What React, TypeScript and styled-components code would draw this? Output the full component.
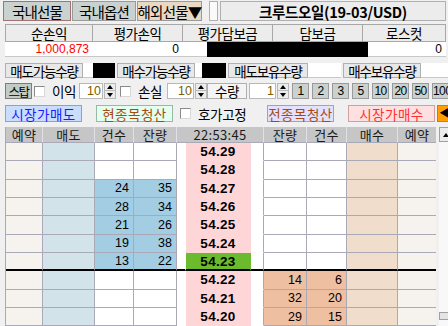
import React from 'react';
import styled, { createGlobalStyle } from 'styled-components';

const GlobalStyle = createGlobalStyle`
  html, body {
    margin: 0;
    padding: 0;
    background: #f0f0f0;
  }

  body {
    font-family: 'Liberation Sans', 'Noto Sans CJK KR', sans-serif;
    font-size: 12px;
    color: #000;
  }
`;

const KR = `'Noto Sans CJK KR', 'Liberation Sans', sans-serif`;
const LINE = '#a9a9b8';

type OrderRow = {
  price: string;
  sellCnt?: string;
  sellQty?: string;
  buyQty?: string;
  buyCnt?: string;
  current?: boolean;
};

const ROWS: OrderRow[] = [
  { price: '54.29' },
  { price: '54.28' },
  { price: '54.27', sellCnt: '24', sellQty: '35' },
  { price: '54.26', sellCnt: '28', sellQty: '34' },
  { price: '54.25', sellCnt: '21', sellQty: '26' },
  { price: '54.24', sellCnt: '19', sellQty: '38' },
  { price: '54.23', sellCnt: '13', sellQty: '22', current: true },
  { price: '54.22', buyQty: '14', buyCnt: '6' },
  { price: '54.21', buyQty: '32', buyCnt: '20' },
  { price: '54.20', buyQty: '29', buyCnt: '15' },
];

const QTY_BUTTONS = ['1', '2', '3', '5', '10', '20', '50', '100'];

const App = () => {
  return (
    <>
      <GlobalStyle />
      <Screen>
        <TopBar>
          <Tab $active>국내선물</Tab>
          <Tab $width={64}>국내옵션</Tab>
          <Tab $tone="#e9d8c2" $width={65}>
            해외선물▼
          </Tab>
          <BlankBox />
          <Title>크루드오일(19-03/USD)</Title>
        </TopBar>

        <InfoTable>
          <InfoHead $width={88}>순손익</InfoHead>
          <InfoHead $width={90}>평가손익</InfoHead>
          <InfoHead $width={90}>평가담보금</InfoHead>
          <InfoHead $width={90}>담보금</InfoHead>
          <InfoHead $width={83}>로스컷</InfoHead>
          <InfoValue $width={88} $color="#ff0000">
            <span>1,000,873</span>
          </InfoValue>
          <InfoValue $width={90}>
            <span>0</span>
          </InfoValue>
          <InfoValue $width={24} />
          <Masked $width={161} />
          <InfoValue $width={78}>
            <span>0</span>
          </InfoValue>
        </InfoTable>

        <QtyBar>
          <QtyLabel>매도가능수량</QtyLabel>
          <QtyValue $width={32}>
            <Masked $width={22} />
          </QtyValue>
          <QtyLabel>매수가능수량</QtyLabel>
          <QtyValue $width={31}>
            <Masked $width={24} />
          </QtyValue>
          <QtyLabel $width={80}>매도보유수량</QtyLabel>
          <QtyValue $width={33} />
          <QtyLabel>매수보유수량</QtyLabel>
          <QtyValue $width={27} />
        </QtyBar>

        <StopBar>
          <StopButton>스탑</StopButton>
          <CheckBox />
          <InlineLabel $width={27}>이익</InlineLabel>
          <Spin value="10" width={24} />
          <CheckBox $gap={4} />
          <InlineLabel $width={29}>손실</InlineLabel>
          <Spin value="10" width={27} />
          <QtyTag>수량</QtyTag>
          <Spin value="1" width={27} />
          <QtyButtons>
            {QTY_BUTTONS.map((q) => (
              <QtyButton key={q}>{q}</QtyButton>
            ))}
          </QtyButtons>
        </StopBar>

        <ActionBar>
          <ActionButton $bg="#c9ddff" $border="#8aa2cc" $color="#1a1aff" $width={77}>
            시장가매도
          </ActionButton>
          <ActionButton $bg="#e2fff0" $border="#9ab8a6" $color="#a84a10" $width={77} $gap={14}>
            현종목청산
          </ActionButton>
          <CheckBox $gap={7} />
          <InlineLabel $width={60} $gap={7}>
            호가고정
          </InlineLabel>
          <ActionButton $bg="#e2e2ff" $border="#a0a0c8" $color="#a84a10" $width={67} $gap={9}>
            전종목청산
          </ActionButton>
          <ActionButton $bg="#ffe0e0" $border="#d0a0a0" $color="#ff3030" $width={87} $gap={14}>
            시장가매수
          </ActionButton>
          <ArrowButton>◀</ArrowButton>
        </ActionBar>

        <BookArea>
          <Book>
            <HeadCell>예약</HeadCell>
            <HeadCell>매도</HeadCell>
            <HeadCell>건수</HeadCell>
            <HeadCell>잔량</HeadCell>
            <HeadCell $span={3}>22:53:45</HeadCell>
            <HeadCell>잔량</HeadCell>
            <HeadCell>건수</HeadCell>
            <HeadCell>매수</HeadCell>
            <HeadCell>예약</HeadCell>
            {ROWS.map((r) => {
              const sellFill = r.sellCnt ? '#a2cde2' : '#ffffff';
              const buyFill = r.buyQty ? '#efbfa2' : '#ffffff';
              const priceBg = r.current ? '#6cbb2e' : '#ffd6d8';
              return (
                <React.Fragment key={r.price}>
                  <Cell $bg="#f6f3ef" $cut={r.current} />
                  <Cell $bg="#d3e3ea" $cut={r.current} />
                  <NumCell $bg={sellFill} $cut={r.current}>
                    {r.sellCnt}
                  </NumCell>
                  <NumCell $bg={sellFill} $cut={r.current}>
                    {r.sellQty}
                  </NumCell>
                  <Cell $bg="#ffffff" $edge="#ffffff" $open $cut={r.current} />
                  <PriceCell $bg={priceBg} $edge={priceBg} $open $cut={r.current}>
                    {r.price}
                  </PriceCell>
                  <Cell $bg="#ffffff" $edge="#ffffff" $cut={r.current} />
                  <NumCell $bg={buyFill} $cut={r.current}>
                    {r.buyQty}
                  </NumCell>
                  <NumCell $bg={buyFill} $cut={r.current}>
                    {r.buyCnt}
                  </NumCell>
                  <Cell $bg="#f0ddcc" $cut={r.current} />
                  <Cell $bg="#f6f3ef" $cut={r.current} />
                </React.Fragment>
              );
            })}
          </Book>
          <ScrollBar>
            <ScrollUp>
              <TriUp />
            </ScrollUp>
            <ScrollTrack>
              <ScrollThumb />
            </ScrollTrack>
          </ScrollBar>
        </BookArea>
      </Screen>
    </>
  );
};

export default App;

const Spin = ({ value, width }: { value: string; width: number }) => (
  <SpinBox>
    <SpinInput $width={width}>{value}</SpinInput>
    <SpinButtons>
      <SpinButton>
        <TriUp />
      </SpinButton>
      <SpinButton>
        <TriDown />
      </SpinButton>
    </SpinButtons>
  </SpinBox>
);

const Screen = styled.div`
  width: 448px;
  height: 326px;
  overflow: hidden;
  display: flex;
  flex-direction: column;
`;

const TopBar = styled.div`
  display: flex;
  align-items: center;
  height: 20px;
  padding: 1px 0 0 3px;
  gap: 1px;
`;

const Tab = styled.div<{ $active?: boolean; $tone?: string; $width?: number }>`
  box-sizing: border-box;
  width: ${(p) => p.$width ?? 68}px;
  height: 20px;
  display: flex;
  align-items: center;
  justify-content: center;
  background: ${(p) => p.$tone ?? '#c9d2ce'};
  border: 1px solid ${(p) => (p.$active ? '#a07474' : '#9a9a9a')};
  font-family: ${KR};
  font-size: 14.5px;
  letter-spacing: -0.8px;
  white-space: nowrap;
`;

const BlankBox = styled.div`
  box-sizing: border-box;
  width: 9px;
  height: 20px;
  margin-left: 6px;
  background: #fafafa;
  border: 1px solid #b0b0b0;
`;

const Title = styled.div`
  box-sizing: border-box;
  flex: 0 0 226px;
  height: 20px;
  margin-left: 1px;
  display: flex;
  align-items: center;
  justify-content: center;
  background: #ececec;
  border: 1px solid #b0b0b0;
  font-family: ${KR};
  font-size: 14.5px;
  font-weight: 700;
  letter-spacing: -0.3px;
`;

const InfoTable = styled.div`
  display: flex;
  flex-wrap: wrap;
  width: 441px;
  margin: 3px 0 0 5px;
`;

const InfoHead = styled.div<{ $width: number }>`
  box-sizing: border-box;
  width: ${(p) => p.$width}px;
  height: 18px;
  display: flex;
  align-items: center;
  justify-content: center;
  background: #ececec;
  border: 1px solid #a8a8a8;
  border-left: 0;
  font-family: ${KR};
  font-size: 13.5px;
  letter-spacing: -0.5px;

  &:first-child {
    border-left: 1px solid #a8a8a8;
  }
`;

const InfoValue = styled.div<{ $width: number; $color?: string }>`
  box-sizing: border-box;
  flex: 0 0 ${(p) => p.$width}px;
  height: 15px;
  display: flex;
  align-items: center;
  justify-content: flex-end;
  padding-right: 4px;
  background: #ffffff;
  border-bottom: 1px solid #c8c8c8;
  color: ${(p) => p.$color ?? '#000'};
  font-size: 12px;
`;

const Masked = styled.div<{ $width: number }>`
  flex: 0 0 ${(p) => p.$width}px;
  height: 15px;
  background: #000;
`;

const QtyBar = styled.div`
  display: flex;
  align-items: center;
  height: 15px;
  margin: 6px 0 0 5px;
`;

const QtyLabel = styled.div<{ $width?: number }>`
  box-sizing: border-box;
  width: ${(p) => p.$width ?? 78}px;
  height: 15px;
  display: flex;
  align-items: center;
  justify-content: center;
  background: #e8e8e8;
  border: 1px solid #b0b0b0;
  font-family: ${KR};
  font-size: 13.5px;
  letter-spacing: -1.2px;
  white-space: nowrap;

  &:not(:first-child) {
    margin-left: 2px;
  }
`;

const QtyValue = styled.div<{ $width: number }>`
  box-sizing: border-box;
  width: ${(p) => p.$width}px;
  height: 15px;
  display: flex;
  justify-content: flex-end;
  background: #ffffff;
  border-bottom: 1px solid #c8c8c8;
`;

const StopBar = styled.div`
  display: flex;
  align-items: center;
  height: 16px;
  margin: 5px 0 0 5px;
`;

const StopButton = styled.div`
  box-sizing: border-box;
  flex: 0 0 27px;
  height: 16px;
  display: flex;
  align-items: center;
  justify-content: center;
  background: #c2cbc4;
  border: 1px solid #7c7c7c;
  font-family: ${KR};
  font-size: 12.5px;
  letter-spacing: -1.5px;
  white-space: nowrap;
  overflow: hidden;
`;

const CheckBox = styled.div<{ $gap?: number }>`
  box-sizing: border-box;
  flex: 0 0 11px;
  height: 11px;
  margin-left: ${(p) => p.$gap ?? 2}px;
  background: #ffffff;
  border: 1px solid #8a8a8a;
  border-right-color: #d8d8d8;
  border-bottom-color: #d8d8d8;
`;

const InlineLabel = styled.div<{ $width: number; $gap?: number }>`
  flex: 0 0 ${(p) => p.$width}px;
  margin-left: ${(p) => p.$gap ?? 7}px;
  font-family: ${KR};
  font-size: 13.5px;
  letter-spacing: -0.3px;
  white-space: nowrap;
`;

const SpinBox = styled.div`
  display: flex;
  height: 16px;
`;

const SpinInput = styled.div<{ $width: number }>`
  box-sizing: border-box;
  width: ${(p) => p.$width}px;
  height: 16px;
  display: flex;
  align-items: center;
  justify-content: flex-end;
  padding-right: 1px;
  background: #ffffff;
  border: 1px solid #b8b8b8;
  color: #7a6000;
  font-size: 12.5px;
`;

const SpinButtons = styled.div`
  display: flex;
  flex-direction: column;
  width: 12px;
  margin-left: 1px;
`;

const SpinButton = styled.div`
  box-sizing: border-box;
  height: 8px;
  display: flex;
  align-items: center;
  justify-content: center;
  background: #ececec;
  border: 1px solid #b8b8b8;

  & + & {
    border-top: 0;
  }
`;

const TriUp = styled.span`
  width: 0;
  height: 0;
  border-left: 3px solid transparent;
  border-right: 3px solid transparent;
  border-bottom: 4px solid #000;
`;

const TriDown = styled.span`
  width: 0;
  height: 0;
  border-left: 3px solid transparent;
  border-right: 3px solid transparent;
  border-top: 4px solid #000;
`;

const QtyTag = styled.div`
  box-sizing: border-box;
  flex: 0 0 40px;
  height: 16px;
  display: flex;
  align-items: center;
  justify-content: center;
  background: #f4f4f4;
  border: 1px solid #b0b0b0;
  margin-right: 2px;
  font-family: ${KR};
  font-size: 13.5px;
  letter-spacing: -0.5px;
`;

const QtyButtons = styled.div`
  display: flex;
  gap: 3px;
  margin-left: 3px;
`;

const QtyButton = styled.div`
  box-sizing: border-box;
  flex: 0 0 17px;
  height: 16px;
  display: flex;
  align-items: center;
  justify-content: center;
  background: #c9d2ce;
  border: 1px solid #9a9a9a;
  font-size: 12px;
  letter-spacing: -0.6px;
`;

const ActionBar = styled.div`
  display: flex;
  align-items: center;
  height: 17px;
  margin: 6px 0 0 5px;
`;

const ActionButton = styled.div<{
  $bg: string;
  $border: string;
  $color: string;
  $width: number;
  $gap?: number;
}>`
  box-sizing: border-box;
  flex: 0 0 ${(p) => p.$width}px;
  height: 17px;
  margin-left: ${(p) => p.$gap ?? 0}px;
  display: flex;
  align-items: center;
  justify-content: center;
  background: ${(p) => p.$bg};
  border: 1px solid ${(p) => p.$border};
  color: ${(p) => p.$color};
  font-family: ${KR};
  font-size: 13.5px;
  letter-spacing: 0.5px;
`;

const ArrowButton = styled.div`
  box-sizing: border-box;
  flex: 0 0 14px;
  height: 17px;
  margin-left: 2px;
  display: flex;
  align-items: center;
  padding-left: 1px;
  background: #ffa000;
  border: 1px solid #d08000;
  font-size: 11px;
  line-height: 1;
`;

const BookArea = styled.div`
  display: flex;
  margin: 5px 0 0 5px;
`;

const Book = styled.div`
  display: grid;
  grid-template-columns: 37px 52px 39px 43px 9px 65px 13px 43px 40px 51px 39px;
  grid-template-rows: 16px repeat(10, 18.33px);
  width: 431px;
  border-left: 1px solid ${LINE};
  box-sizing: border-box;
`;

const HeadCell = styled.div<{ $span?: number }>`
  grid-column: span ${(p) => p.$span ?? 1};
  box-sizing: border-box;
  display: flex;
  align-items: center;
  justify-content: center;
  background: #c6c6c6;
  border-right: 1px solid #e0e0e6;
  border-bottom: 1px solid ${LINE};
  font-family: ${KR};
  font-size: 13px;
  letter-spacing: 0.3px;
  color: #1a1a1a;
`;

const Cell = styled.div<{ $bg: string; $edge?: string; $open?: boolean; $cut?: boolean }>`
  box-sizing: border-box;
  display: flex;
  align-items: center;
  background: ${(p) => p.$bg};
  border-right: 1px solid ${(p) => (p.$open ? p.$bg : LINE)};
  border-bottom: ${(p) => (p.$cut ? '2px solid #000' : `1px solid ${p.$edge ?? LINE}`)};
`;

const NumCell = styled(Cell)`
  justify-content: flex-end;
  padding-right: 4px;
  font-size: 12.5px;
`;

const PriceCell = styled(Cell)`
  justify-content: center;
  font-size: 13.5px;
  font-weight: 700;
  letter-spacing: 0.3px;
`;

const ScrollBar = styled.div`
  display: flex;
  flex-direction: column;
  flex: 0 0 12px;
  padding-left: 3px;
  background: #f0f0f0;
`;

const ScrollUp = styled.div`
  box-sizing: border-box;
  height: 15px;
  display: flex;
  align-items: center;
  justify-content: center;
  background: #ececec;
  border: 1px solid #a0a0a0;
  border-right: 0;
`;

const ScrollTrack = styled.div`
  flex: 1;
  display: flex;
  flex-direction: column;
  justify-content: flex-end;
  padding-bottom: 6px;
  background: #f8f8f8;
`;

const ScrollThumb = styled.div`
  box-sizing: border-box;
  height: 8px;
  background: #e4e4e4;
  border: 1px solid #a0a0a0;
  border-right: 0;
`;
